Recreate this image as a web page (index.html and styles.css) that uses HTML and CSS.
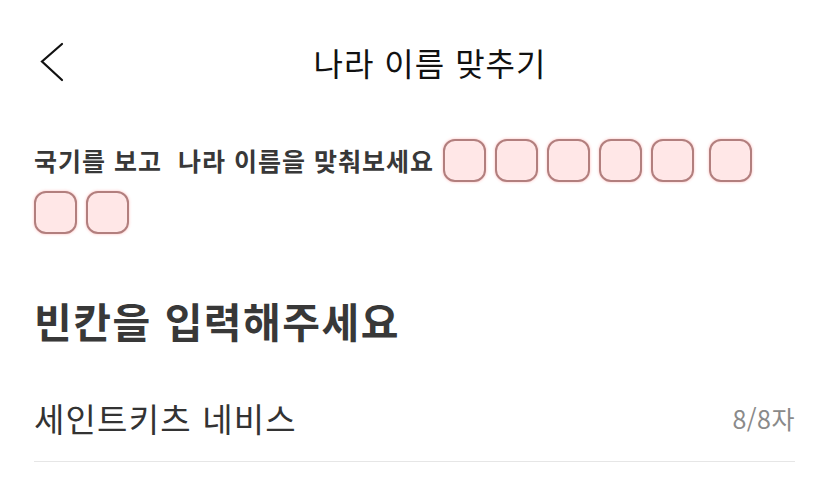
FILE: index.html
```html
<!DOCTYPE html>
<html lang="ko">
<head>
<meta charset="utf-8">
<title>나라 이름 맞추기</title>
<link rel="stylesheet" href="styles.css">
</head>
<body>
<header class="topbar">
  <button class="back" type="button" aria-label="뒤로">
    <svg width="24" height="40" viewBox="0 0 24 40" aria-hidden="true">
      <polyline points="22,2 2,19.5 22,38" fill="none" stroke="#111" stroke-width="2.2" stroke-linecap="round" stroke-linejoin="miter"/>
    </svg>
  </button>
  <h1 class="title">나라 이름 맞추기</h1>
</header>
<main class="content">
  <div class="quiz">
    <p class="quiz-text">국기를 보고&nbsp; 나라 이름을 맞춰보세요</p>
    <span class="blank"></span>
    <span class="blank"></span>
    <span class="blank"></span>
    <span class="blank"></span>
    <span class="blank"></span>
    <span class="blank word-start"></span>
    <span class="blank"></span>
    <span class="blank"></span>
  </div>
  <h2 class="heading">빈칸을 입력해주세요</h2>
  <div class="field">
    <span class="field-value">세인트키츠 네비스</span>
    <span class="field-count">8/8자</span>
  </div>
</main>
</body>
</html>
```
FILE: styles.css
```css
* {
  box-sizing: border-box;
}

html, body {
  margin: 0;
  padding: 0;
  background: #ffffff;
}

body {
  font-family: "Noto Sans CJK KR", "Noto Sans", sans-serif;
  color: #333333;
}

.topbar {
  display: flex;
  align-items: center;
  padding: 38px 34px 0 40px;
}

.back {
  display: flex;
  align-items: center;
  justify-content: center;
  width: 24px;
  height: 48px;
  padding: 0;
  margin: 0;
  border: 0;
  background: none;
}

.title {
  flex: 1;
  margin: 0;
  text-align: center;
  font-size: 32px;
  line-height: 48px;
  font-weight: 400;
  letter-spacing: 1px;
  color: #111111;
}

.content {
  padding: 0 35px 0 34px;
}

.quiz {
  display: flex;
  flex-wrap: wrap;
  align-items: center;
  column-gap: 9px;
  row-gap: 9px;
  margin-top: 53px;
}

.quiz-text {
  margin: 0;
  font-size: 25px;
  line-height: 43px;
  font-weight: 700;
  letter-spacing: 1px;
  color: #383838;
  white-space: nowrap;
}

.blank {
  display: block;
  width: 43px;
  height: 43px;
  border: 2px solid #b27f7e;
  border-radius: 12px;
  background: #ffe7e7;
  box-shadow: 0 0 3px rgba(255, 170, 170, 0.8);
}

.word-start {
  margin-left: 6px;
}

.heading {
  margin: 58px 0 0;
  font-size: 41px;
  line-height: 56px;
  font-weight: 700;
  letter-spacing: 1.5px;
  color: #383838;
}

.field {
  display: flex;
  align-items: center;
  justify-content: space-between;
  margin-top: 50px;
  padding-bottom: 23px;
  border-bottom: 1px solid #e6e6e6;
}

.field-value {
  font-size: 33px;
  line-height: 40px;
  letter-spacing: 1.2px;
  color: #333333;
}

.field-count {
  font-size: 25px;
  line-height: 40px;
  letter-spacing: 0.5px;
  color: #8a8a8a;
}
```
